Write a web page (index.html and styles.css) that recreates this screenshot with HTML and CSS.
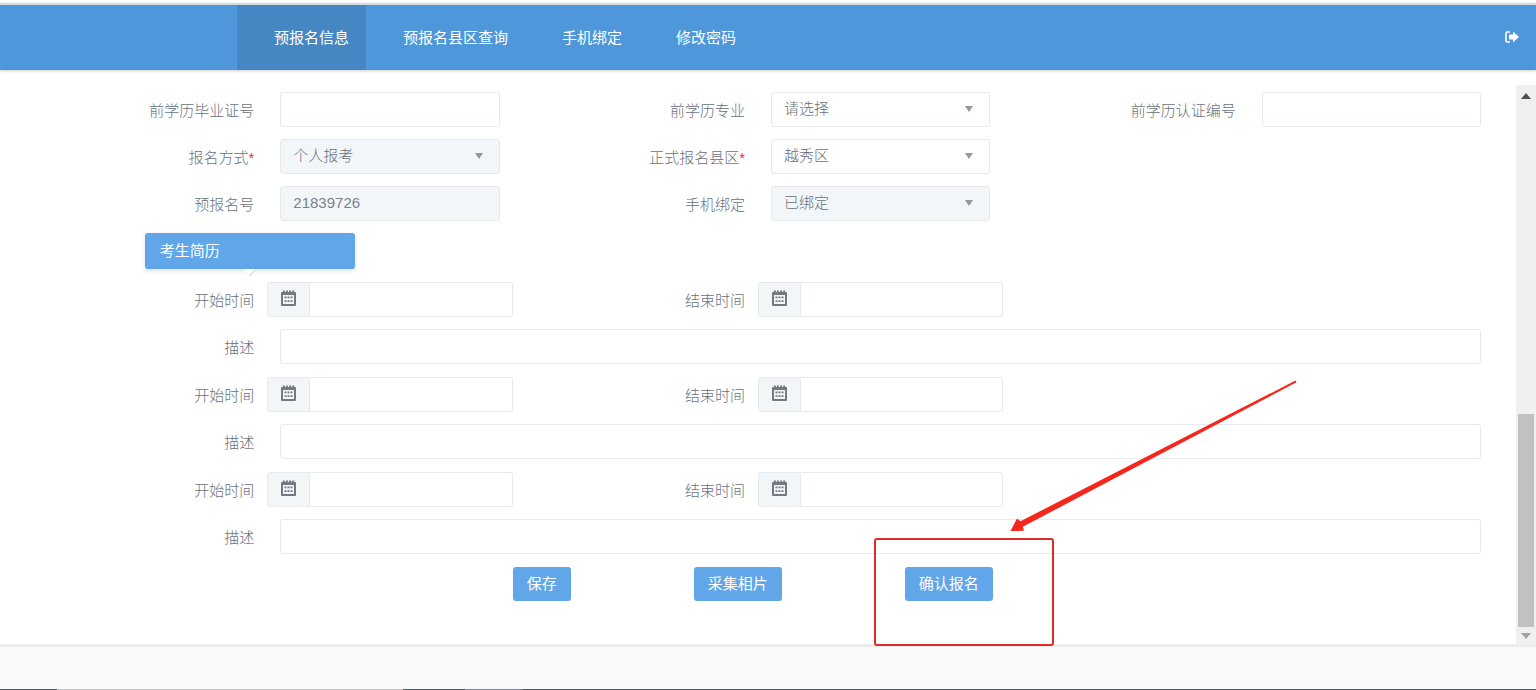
FILE: index.html
```
<!DOCTYPE html>
<html lang="zh-CN">
<head>
  <meta charset="UTF-8">
  <title>预报名信息</title>
  <link rel="stylesheet" href="styles.css">
</head>
<body>
  <svg class="sprite" aria-hidden="true">
    <symbol id="icon-calendar" viewBox="0 0 15 16">
      <path fill-rule="evenodd" d="M1 2h.8V.5h2V2h1.100V.5h2V2h1.200V.5h2V2h1.100V.5h2V2h.8q1 0 1 1v12q0 1-1 1H1q-1 0-1-1V3q0-1 1-1zM2 5v9h11V5z"/>
      <path d="M3.500 6.500h2v1.800h-2zM6.500 6.500h2v1.800h-2zM9.500 6.500h2v1.800h-2zM3.500 10.200h2V12h-2zM6.500 10.200h2V12h-2zM9.500 10.200h2V12h-2z"/>
    </symbol>
    <symbol id="icon-caret" viewBox="0 0 8 6">
      <path d="M0 0h8L4 6z"/>
    </symbol>
  </svg>

  <header class="navbar">
    <nav class="nav">
      <a class="nav-item active" href="#">预报名信息</a>
      <a class="nav-item" href="#">预报名县区查询</a>
      <a class="nav-item" href="#">手机绑定</a>
      <a class="nav-item" href="#">修改密码</a>
    </nav>
    <a class="logout" href="#" aria-label="退出">
      <svg width="14" height="12" viewBox="0 0 14 12">
        <path d="M5 1H2.500Q1 1 1 2.500v7Q1 11 2.500 11H5" fill="none" stroke="#fff" stroke-width="1.600"/>
        <path d="M4 3.500h4V.5l6 5.500-6 5.500v-3H4z" fill="#fff"/>
      </svg>
    </a>
  </header>

  <main class="main">
    <form class="form" onsubmit="return false">
      <div class="row">
        <div class="group">
          <label for="certNo">前学历毕业证号</label>
          <div class="field"><input type="text" id="certNo"></div>
        </div>
        <div class="group">
          <label for="major">前学历专业</label>
          <div class="field">
            <select id="major"><option>请选择</option></select>
            <svg class="caret"><use href="#icon-caret"/></svg>
          </div>
        </div>
        <div class="group">
          <label for="authNo">前学历认证编号</label>
          <div class="field"><input type="text" id="authNo"></div>
        </div>
      </div>

      <div class="row">
        <div class="group">
          <label for="mode">报名方式<span class="required">*</span></label>
          <div class="field">
            <select id="mode" disabled><option>个人报考</option></select>
            <svg class="caret"><use href="#icon-caret"/></svg>
          </div>
        </div>
        <div class="group">
          <label for="area">正式报名县区<span class="required">*</span></label>
          <div class="field">
            <select id="area"><option>越秀区</option></select>
            <svg class="caret"><use href="#icon-caret"/></svg>
          </div>
        </div>
      </div>

      <div class="row">
        <div class="group">
          <label for="preNo">预报名号</label>
          <div class="field"><input type="text" id="preNo" value="21839726" readonly></div>
        </div>
        <div class="group">
          <label for="phone">手机绑定</label>
          <div class="field">
            <select id="phone" disabled><option>已绑定</option></select>
            <svg class="caret"><use href="#icon-caret"/></svg>
          </div>
        </div>
      </div>

      <h2 class="section-title">考生简历
        <svg class="notch" width="14" height="8" viewBox="0 0 14 8">
          <path d="M0 0h13L7 7z" fill="#fff"/>
          <path d="M13 0L6 7" stroke="#dcdfe2" stroke-width="1.500"/>
        </svg>
      </h2>

      <div class="row">
        <div class="group">
          <label for="start1">开始时间</label>
          <div class="date-field">
            <span class="addon"><svg><use href="#icon-calendar"/></svg></span>
            <input type="text" id="start1">
          </div>
        </div>
        <div class="group">
          <label for="end1">结束时间</label>
          <div class="date-field">
            <span class="addon"><svg><use href="#icon-calendar"/></svg></span>
            <input type="text" id="end1">
          </div>
        </div>
      </div>
      <div class="row row-desc">
        <label for="desc1">描述</label>
        <div class="field"><input type="text" id="desc1"></div>
      </div>

      <div class="row">
        <div class="group">
          <label for="start2">开始时间</label>
          <div class="date-field">
            <span class="addon"><svg><use href="#icon-calendar"/></svg></span>
            <input type="text" id="start2">
          </div>
        </div>
        <div class="group">
          <label for="end2">结束时间</label>
          <div class="date-field">
            <span class="addon"><svg><use href="#icon-calendar"/></svg></span>
            <input type="text" id="end2">
          </div>
        </div>
      </div>
      <div class="row row-desc">
        <label for="desc2">描述</label>
        <div class="field"><input type="text" id="desc2"></div>
      </div>

      <div class="row">
        <div class="group">
          <label for="start3">开始时间</label>
          <div class="date-field">
            <span class="addon"><svg><use href="#icon-calendar"/></svg></span>
            <input type="text" id="start3">
          </div>
        </div>
        <div class="group">
          <label for="end3">结束时间</label>
          <div class="date-field">
            <span class="addon"><svg><use href="#icon-calendar"/></svg></span>
            <input type="text" id="end3">
          </div>
        </div>
      </div>
      <div class="row row-desc">
        <label for="desc3">描述</label>
        <div class="field"><input type="text" id="desc3"></div>
      </div>

      <div class="actions">
        <button class="btn" type="button">保存</button>
        <button class="btn" type="button">采集相片</button>
        <div class="confirm">
          <button class="btn" type="submit">确认报名</button>
          <div class="mark-box"></div>
          <svg class="mark-arrow" width="288" height="152" viewBox="0 0 288 152">
            <path d="M285.500.6L10.500 141.200 7 138.500.5 151l13.500-.2-1.200-4L286.500 2.200z" fill="#f5261b"/>
          </svg>
        </div>
      </div>
    </form>

    <div class="scrollbar" aria-hidden="true">
      <svg class="scroll-up" width="10" height="6" viewBox="0 0 10 6"><path d="M0 6h10L5 0z" fill="#505050"/></svg>
      <div class="thumb"></div>
      <svg class="scroll-down" width="10" height="6" viewBox="0 0 10 6"><path d="M0 0h10L5 6z" fill="#a3a3a3"/></svg>
    </div>
  </main>

  <footer class="footer"></footer>
</body>
</html>
```
FILE: styles.css
```
* {
  box-sizing: border-box;
}
body {
  margin: 0;
  padding-top: 3px;
  min-height: 100vh;
  display: flex;
  flex-direction: column;
  background-color: #fff;
  color: #69717b;
  font-family: "Liberation Sans", "Noto Sans CJK SC", sans-serif;
  font-weight: 300;
  font-size: 15px;
}
.sprite {
  display: none;
}

/* top bar */
.navbar {
  display: flex;
  justify-content: space-between;
  height: 67px;
  background-color: #4d97da;
  border-top: 2px solid #d3dbe3;
  box-shadow: 0 1px 3px rgba(0, 0, 0, 0.2);
}
.nav {
  display: flex;
  margin-left: 237px;
}
.nav-item {
  padding: 0 17px 0 37px;
  line-height: 65px;
  color: #fff;
  font-weight: 400;
  text-decoration: none;
}
.nav-item.active {
  background-color: #4587c3;
}
.logout {
  display: flex;
  align-items: center;
  padding: 0 17px 2px;
}

/* form */
.main {
  flex: 1;
  display: flex;
}
.form {
  flex: 1;
  padding: 22px 22px 0;
}
.row {
  display: flex;
  margin-bottom: 12px;
}
.row-desc {
  margin-bottom: 13px;
}
.group {
  display: flex;
  width: 33.3333%;
}
label {
  width: 50%;
  padding: 2px 13px 0 0;
  line-height: 33px;
  text-align: right;
  white-space: nowrap;
}
.row-desc label {
  width: 16.6667%;
}
.required {
  color: #f0303c;
}
.field {
  position: relative;
  width: 50%;
  padding: 0 13px;
}
.row-desc .field {
  flex: 1;
}
input, select {
  display: block;
  width: 100%;
  height: 35px;
  padding: 0 12px 2px;
  border: 1px solid #e7eaec;
  border-radius: 3px;
  background-color: #fff;
  color: #69717b;
  font: inherit;
  appearance: none;
  outline: none;
}
select:disabled, input[readonly] {
  background-color: #f2f6f9;
  opacity: 1;
}
input[readonly] {
  color: #7b838d;
}
.caret {
  position: absolute;
  top: 14px;
  right: 30px;
  width: 8px;
  height: 6px;
  fill: #92989f;
  pointer-events: none;
}
.date-field {
  display: flex;
  width: 50%;
}
.date-field input {
  flex: 1;
  min-width: 0;
  border-left: 0;
  border-radius: 0 3px 3px 0;
}
.addon {
  display: flex;
  justify-content: center;
  width: 43px;
  height: 35px;
  padding-top: 7px;
  border: 1px solid #e7eaec;
  border-radius: 3px 0 0 3px;
  background-color: #f2f6f9;
}
.addon svg {
  width: 15px;
  height: 16px;
  fill: #717982;
}
.section-title {
  position: relative;
  width: 210px;
  margin: 0 0 13px 8.3333%;
  padding-left: 15px;
  border-radius: 3px;
  background-color: #62a6ea;
  box-shadow: 0 2px 5px rgba(0, 0, 0, 0.12);
  color: #fff;
  font-size: 15px;
  font-weight: 400;
  line-height: 36px;
}
.notch {
  position: absolute;
  top: 36px;
  left: 98px;
}

/* buttons */
.actions {
  display: flex;
  gap: 123px;
  margin-left: 33.3333%;
  padding-bottom: 43px;
}
.btn {
  height: 34px;
  padding: 0 14px 4px;
  border: none;
  border-radius: 3px;
  background-color: #62a6ea;
  color: #fff;
  font: inherit;
  font-weight: 400;
  cursor: pointer;
}
.btn:hover {
  background-color: #4d97da;
}
.confirm {
  position: relative;
}
.mark-box {
  position: absolute;
  top: -29px;
  left: -31px;
  width: 180px;
  height: 108px;
  border: 2px solid #e02c28;
  border-radius: 3px;
  pointer-events: none;
}
.mark-arrow {
  position: absolute;
  top: -187px;
  left: 105px;
  pointer-events: none;
}

/* scrollbar */
.scrollbar {
  display: flex;
  flex-direction: column;
  align-items: center;
  justify-content: flex-end;
  width: 20px;
  margin-top: 15px;
  padding: 8px 0 5px;
  background-color: #f0f0f0;
}
.scroll-up {
  margin-bottom: auto;
}
.thumb {
  width: 16px;
  height: 39%;
  margin-bottom: 6px;
  background-color: #c1c1c1;
}

.footer {
  height: 46px;
  border-top: 3px solid #ececec;
  background: linear-gradient(to right, #465a68 57px, #c4c8ca 57px, #c4c8ca 403px, #465a68 403px, #465a68 465px, #77869c 465px, #77869c 523px, #465a68 523px) bottom / 100% 1px no-repeat #fafafa;
}
```
